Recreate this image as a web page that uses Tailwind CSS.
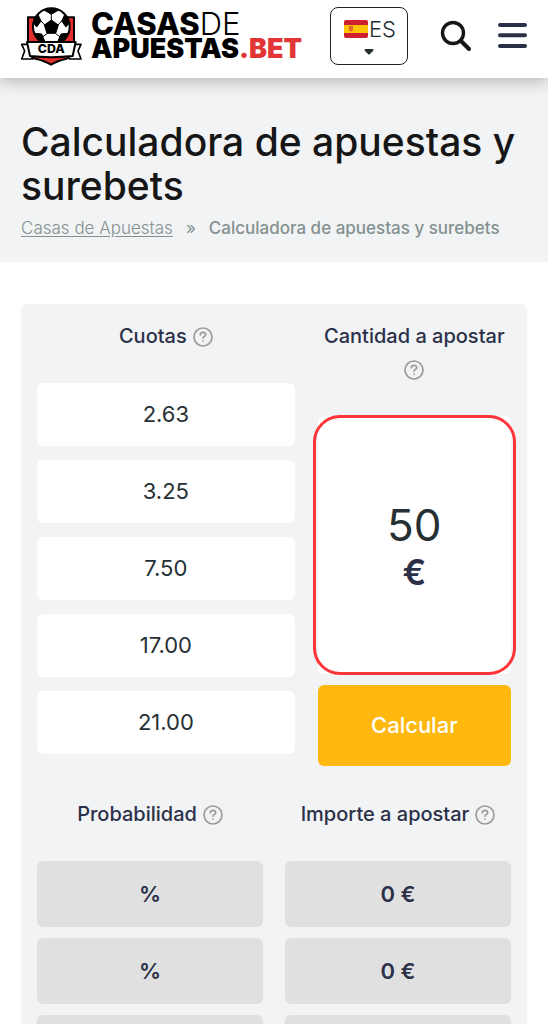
<!DOCTYPE html>
<html lang="es">

<head>
    <meta charset="UTF-8">
    <meta name="viewport" content="width=device-width, initial-scale=1.0">
    <title>Calculadora de apuestas y surebets</title>
    <script src="https://cdn.jsdelivr.net/npm/@tailwindcss/browser@4"></script>
</head>

<body class="h-screen overflow-hidden bg-white font-['Inter','Liberation_Sans',sans-serif] text-[#2b3048]">
    <!-- Header -->
    <header class="relative z-10 flex h-[78px] items-center bg-white px-5 pb-[6px] shadow-[0_2px_16px_rgba(0,0,0,0.3)]">
        <a href="#" class="flex items-center gap-2 text-black" aria-label="Casas de Apuestas">
            <svg class="h-[60px] w-[63px] shrink-0" viewBox="30 18 189 180">
                <path d="M54 52h138v96q0 22-22 28-28 6-47 18-19-12-47-18-22-6-22-28z" fill="#e2302f" stroke="#000" stroke-width="6" stroke-linejoin="round" />
                <circle cx="124" cy="80" r="55" fill="#fff" stroke="#000" stroke-width="6" />
                <g stroke="#000" stroke-width="3" stroke-linejoin="round">
                    <path d="M124 60l21 15-8 25h-26l-8-25z" />
                    <path d="M102 30q22-9 44 0l-22 13zM70 68l13-26 10 21-13 18zM178 68l-13-26-10 21 13 18zM86 123l-12-23 21 2 9 21zM162 123l12-23-21 2-9 21z" />
                    <path d="M124 43v18M93 63l12 13M155 63l-12 13M112 100l-16 12M136 100l16 12" fill="none" />
                </g>
                <path d="M54 133H35l9 20-9 24h34l-7-12zM194 133h19l-9 20 9 24h-34l-7-12z" fill="#fff" stroke="#000" stroke-width="5" stroke-linejoin="round" />
                <path d="M51 126h146l-9 42q-64 7-128 0z" fill="#fff" stroke="#000" stroke-width="6" stroke-linejoin="round" />
                <text x="124" y="159" text-anchor="middle" font-family="Inter" font-weight="800" font-size="37">CDA</text>
            </svg>
            <span class="flex flex-col font-extrabold">
                <span class="text-[31px] leading-[25px]">CASAS<span class="font-light">DE</span></span>
                <span class="text-[27px] leading-[25px] font-black">APUESTAS<span class="text-[#e23535]">.BET</span></span>
            </span>
        </a>

        <!-- Language -->
        <label class="ml-auto flex h-[58px] w-[78px] flex-col items-center justify-center rounded-lg border border-[#222]" aria-label="Idioma">
            <span class="flex items-center gap-px pl-1">
                <svg class="h-[18px] w-6" viewBox="0 0 24 18">
                    <rect width="24" height="18" rx="2" fill="#cf1f2c" />
                    <path d="M0 5h24v8H0z" fill="#ffc400" />
                    <path d="M5 6h4v4q-2 3-4 0z" fill="#e2672f" />
                </svg>
                <select class="w-[29px] appearance-none bg-transparent text-[22px] leading-6 font-light text-[#263033]">
                    <option>ES</option>
                </select>
            </span>
            <svg class="mt-2 h-[6px] w-[10px]" viewBox="0 0 10 6">
                <path d="M1 0h8q1 1 0 2L6 5q-1 1-2 0L1 2q-1-1 0-2z" fill="#263033" />
            </svg>
        </label>

        <button class="ml-8" aria-label="Buscar">
            <svg class="h-8 w-8" viewBox="0 0 32 32" fill="none" stroke="#161616" stroke-linecap="round">
                <circle cx="13" cy="13" r="10.5" stroke-width="3.4" />
                <path d="M21 21l8 8" stroke-width="4" />
            </svg>
        </button>
        <button class="ml-6" aria-label="Menú">
            <svg class="h-8 w-8" viewBox="0 0 32 32" stroke="#2b3048" stroke-width="4" stroke-linecap="round">
                <path d="M4 5h25M4 15.300h25M4 26h25" />
            </svg>
        </button>
    </header>
    <!-- Header end -->

    <!-- Title -->
    <section class="bg-[#f1f3f5] px-[21px] pt-[42px] pb-[22px]">
        <h1 class="text-[39px] leading-[44px] font-medium text-[#161616]">Calculadora de apuestas y surebets</h1>
        <nav class="mt-2 flex gap-[13px] text-[17px] leading-6 text-[#84918f]">
            <a href="#" class="font-light underline underline-offset-2">Casas de Apuestas</a>
            <span>»</span>
            <span class="font-medium">Calculadora de apuestas y surebets</span>
        </nav>
    </section>

    <!-- Calculator -->
    <main class="px-[21px] pt-[42px]">
        <form class="rounded-md bg-[#f1f3f5] p-4">
            <div class="grid grid-cols-[4fr_3fr] items-start gap-x-[23px]">
                <fieldset class="flex min-w-0 flex-col gap-[14px]">
                    <legend class="mb-[30px] flex w-full items-center justify-center gap-[6px] text-[20px] leading-[33px] font-medium">
                        Cuotas
                        <svg class="h-5 w-5" viewBox="0 0 20 20" fill="none" stroke="#9b9b9b" stroke-width="1.7" stroke-linecap="round">
                            <circle cx="10" cy="10" r="9" />
                            <path d="M7.300 7.800q.2-2.400 2.700-2.400T12.700 7.500q0 1.400-1.500 2-1.100.5-1.100 1.600M10 14v.1" />
                        </svg>
                    </legend>
                    <input type="text" value="2.63" aria-label="Cuota 1" class="h-[63px] w-full rounded-md bg-white pb-[2px] text-center text-[22px] text-[#263033]">
                    <input type="text" value="3.25" aria-label="Cuota 2" class="h-[63px] w-full rounded-md bg-white pb-[2px] text-center text-[22px] text-[#263033]">
                    <input type="text" value="7.50" aria-label="Cuota 3" class="h-[63px] w-full rounded-md bg-white pb-[2px] text-center text-[22px] text-[#263033]">
                    <input type="text" value="17.00" aria-label="Cuota 4" class="h-[63px] w-full rounded-md bg-white pb-[2px] text-center text-[22px] text-[#263033]">
                    <input type="text" value="21.00" aria-label="Cuota 5" class="h-[63px] w-full rounded-md bg-white pb-[2px] text-center text-[22px] text-[#263033]">
                </fieldset>

                <div>
                    <label for="cantidad" class="flex flex-col items-center text-[20px] leading-[33px] font-medium whitespace-nowrap">
                        Cantidad a apostar
                        <span class="flex h-[33px] items-center">
                            <svg class="h-5 w-5" viewBox="0 0 20 20" fill="none" stroke="#9b9b9b" stroke-width="1.7" stroke-linecap="round">
                                <circle cx="10" cy="10" r="9" />
                                <path d="M7.300 7.800q.2-2.400 2.700-2.400T12.700 7.500q0 1.400-1.500 2-1.100.5-1.100 1.600M10 14v.1" />
                            </svg>
                        </span>
                    </label>
                    <div class="relative mt-[30px] flex h-[258px] flex-col items-center justify-center rounded-md bg-white pb-[2px]">
                        <input type="text" id="cantidad" value="50" class="h-14 w-full text-center text-[44px] text-[#263033]">
                        <span class="text-[35px] leading-[38px] font-semibold">€</span>
                        <!-- Highlight -->
                        <div class="pointer-events-none absolute -inset-x-[5px] -inset-y-px rounded-[27px] border-3 border-[#fd3438]"></div>
                    </div>
                    <button type="button" class="mt-[11px] h-[81px] w-full rounded-md bg-[#ffb80e] text-[22px] font-medium text-white">Calcular</button>
                </div>
            </div>

            <!-- Results -->
            <table class="mt-8 w-full table-fixed text-center text-[22px]">
                <thead>
                    <tr class="text-[20px] leading-[33px] whitespace-nowrap">
                        <th class="pr-[11px] pb-[30px] font-medium">
                            <span class="flex items-center justify-center gap-[6px]">Probabilidad
                                <svg class="h-5 w-5" viewBox="0 0 20 20" fill="none" stroke="#9b9b9b" stroke-width="1.7" stroke-linecap="round">
                                    <circle cx="10" cy="10" r="9" />
                                    <path d="M7.300 7.800q.2-2.400 2.700-2.400T12.700 7.500q0 1.400-1.500 2-1.100.5-1.100 1.600M10 14v.1" />
                                </svg>
                            </span>
                        </th>
                        <th class="pb-[30px] pl-[11px] font-medium">
                            <span class="flex items-center justify-center gap-[6px]">Importe a apostar
                                <svg class="h-5 w-5" viewBox="0 0 20 20" fill="none" stroke="#9b9b9b" stroke-width="1.7" stroke-linecap="round">
                                    <circle cx="10" cy="10" r="9" />
                                    <path d="M7.300 7.800q.2-2.400 2.700-2.400T12.700 7.500q0 1.400-1.500 2-1.100.5-1.100 1.600M10 14v.1" />
                                </svg>
                            </span>
                        </th>
                    </tr>
                </thead>
                <tbody class="font-semibold">
                    <tr>
                        <td class="pr-[11px] pb-[11px]"><div class="rounded-md bg-[#e0e0e0] leading-[66px]">%</div></td>
                        <td class="pb-[11px] pl-[11px]"><div class="rounded-md bg-[#e0e0e0] leading-[66px]">0 €</div></td>
                    </tr>
                    <tr>
                        <td class="pr-[11px] pb-[11px]"><div class="rounded-md bg-[#e0e0e0] leading-[66px]">%</div></td>
                        <td class="pb-[11px] pl-[11px]"><div class="rounded-md bg-[#e0e0e0] leading-[66px]">0 €</div></td>
                    </tr>
                    <tr>
                        <td class="pr-[11px] pb-[11px]"><div class="h-[66px] rounded-md bg-[#e0e0e0]"></div></td>
                        <td class="pb-[11px] pl-[11px]"><div class="h-[66px] rounded-md bg-[#e0e0e0]"></div></td>
                    </tr>
                </tbody>
            </table>
        </form>
    </main>
    <!-- Calculator end -->
</body>

</html>
